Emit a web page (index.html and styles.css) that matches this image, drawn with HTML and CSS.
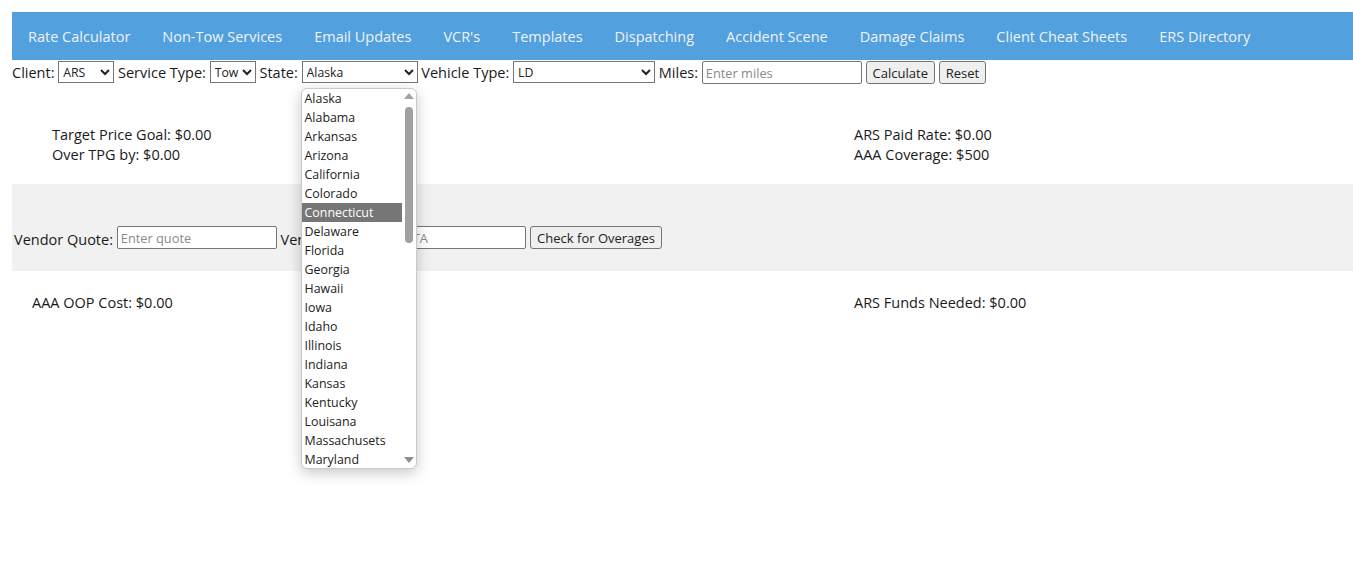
FILE: index.html
```html
<!DOCTYPE html>
<html>
<head>
<meta charset="utf-8">
<link rel="stylesheet" href="styles.css">
</head>
<body>
<nav class="topnav">
  <a class="nav-link">Rate Calculator</a>
  <a class="nav-link">Non-Tow Services</a>
  <a class="nav-link">Email Updates</a>
  <a class="nav-link">VCR's</a>
  <a class="nav-link">Templates</a>
  <a class="nav-link">Dispatching</a>
  <a class="nav-link">Accident Scene</a>
  <a class="nav-link">Damage Claims</a>
  <a class="nav-link">Client Cheat Sheets</a>
  <a class="nav-link">ERS Directory</a>
</nav>
<div class="form-row">
  <label>Client:</label> <select class="sel sel-client"><option>ARS</option></select>
  <label>Service Type:</label> <select class="sel sel-service"><option>Tow</option></select>
  <label>State:</label> <span class="state-wrap"><select class="sel sel-state"><option>Alaska</option></select><div class="dropdown">
      <ul class="dd-list">
        <li>Alaska</li><li>Alabama</li><li>Arkansas</li><li>Arizona</li><li>California</li>
        <li>Colorado</li><li class="active">Connecticut</li><li>Delaware</li><li>Florida</li><li>Georgia</li>
        <li>Hawaii</li><li>Iowa</li><li>Idaho</li><li>Illinois</li><li>Indiana</li>
        <li>Kansas</li><li>Kentucky</li><li>Louisana</li><li>Massachusets</li><li>Maryland</li>
      </ul>
      <div class="dd-scroll">
        <span class="arrow-up"></span>
        <span class="thumb"></span>
        <span class="arrow-down"></span>
      </div>
    </div></span>
  <label>Vehicle Type:</label> <select class="sel sel-vehicle"><option>LD</option></select>
  <label>Miles:</label> <input class="txt" type="text" placeholder="Enter miles"> <button class="btn">Calculate</button> <button class="btn">Reset</button>
</div>
<section class="results results-top">
  <div class="col col-left">
    <div>Target Price Goal: $0.00</div>
    <div>Over TPG by: $0.00</div>
  </div>
  <div class="col col-right">
    <div>ARS Paid Rate: $0.00</div>
    <div>AAA Coverage: $500</div>
  </div>
</section>
<section class="band">
  <label>Vendor Quote:</label> <input class="txt" type="text" placeholder="Enter quote"> <label>Vendor ETA:</label> <input class="txt" type="text" placeholder="Enter ETA"> <button class="btn">Check for Overages</button>
</section>
<section class="results results-bottom">
  <div class="col col-left2">AAA OOP Cost: $0.00</div>
  <div class="col col-right">ARS Funds Needed: $0.00</div>
</section>
</body>
</html>
```

FILE: styles.css
```css
* {
  box-sizing: border-box;
}
html {
  min-height: 100%;
}
body {
  margin: 12px 0 0 12px;
  min-height: 549px;
  font-family: "Open Sans", "Liberation Sans", sans-serif;
  font-size: 14.5px;
  color: #1a1a1a;
  background: #fff;
}
.topnav {
  display: flex;
  background: #52a0de;
  height: 48px;
  align-items: center;
}
.nav-link {
  padding: 2px 16px 0;
  color: #eef3f9;
  font-size: 14.5px;
  line-height: 24px;
  white-space: nowrap;
}
.form-row {
  height: 24px;
  line-height: 22px;
  padding-top: 2px;
  white-space: nowrap;
}
.sel, .txt, .btn {
  font-family: "Open Sans", "Liberation Sans", sans-serif;
  font-size: 13px;
  vertical-align: top;
}
.form-row label {
  vertical-align: top;
}
.form-row .sel, .form-row .txt, .form-row .btn, .form-row .state-wrap {
  margin-top: -1px;
}
.form-row .state-wrap .sel {
  margin-top: 0;
}
.sel {
  height: 22px;
  border: 1px solid #767676;
  border-radius: 0;
  background: #fff;
  color: #222;
  padding: 0;
  font-size: 12.3px;
}
.sel-client { width: 56px; }
.sel-service { width: 46px; }
.sel-state { width: 116px; }
.sel-vehicle { width: 142px; }
.txt {
  width: 160px;
  height: 23px;
  border: 1px solid #767676;
  border-radius: 2px;
  padding: 1px 3px;
  color: #222;
  font-size: 12.8px;
}
.txt::placeholder {
  color: #8a8a8a;
}
.btn {
  height: 23px;
  padding: 0 6px;
  border: 1px solid #767676;
  border-radius: 3px;
  background: #efefef;
  color: #222;
}
.state-wrap {
  position: relative;
  display: inline-block;
  vertical-align: top;
  line-height: 0;
}
.dropdown {
  position: absolute;
  left: -1px;
  top: 27px;
  width: 116px;
  height: 381px;
  background: #fff;
  border: 1px solid #c9c9c9;
  border-radius: 6px;
  box-shadow: 0 4px 14px rgba(0, 0, 0, 0.22);
  display: flex;
  overflow: hidden;
  z-index: 10;
  line-height: 19px;
}
.dd-list {
  list-style: none;
  margin: 0;
  padding: 0;
  width: 100px;
  font-size: 12.4px;
  color: #222;
}
.dd-list li {
  height: 19px;
  padding-left: 3px;
  white-space: nowrap;
}
.dd-list li.active {
  background: #767676;
  color: #fff;
}
.dd-scroll {
  position: relative;
  flex: 1;
}
.arrow-up {
  position: absolute;
  top: 4px;
  left: 2px;
  width: 0;
  height: 0;
  border-left: 5px solid transparent;
  border-right: 5px solid transparent;
  border-bottom: 6px solid #a3a3a3;
}
.arrow-down {
  position: absolute;
  bottom: 5px;
  left: 2px;
  width: 0;
  height: 0;
  border-left: 5px solid transparent;
  border-right: 5px solid transparent;
  border-top: 6px solid #8f8f8f;
}
.thumb {
  position: absolute;
  top: 18px;
  left: 3px;
  width: 8px;
  height: 136px;
  border-radius: 4px;
  background: #a0a0a0;
}
.results {
  display: flex;
  line-height: 20px;
}
.results-top {
  padding: 41px 0 19px;
}
.col-left {
  width: 842px;
  padding-left: 40px;
}
.col-left2 {
  width: 842px;
  padding-left: 20px;
}
.results-bottom {
  padding-top: 22px;
}
.band {
  background: #f1f1f1;
  height: 87px;
  padding: 42px 2px 0;
  line-height: 23px;
  white-space: nowrap;
}
.band label {
  vertical-align: middle;
}
```
